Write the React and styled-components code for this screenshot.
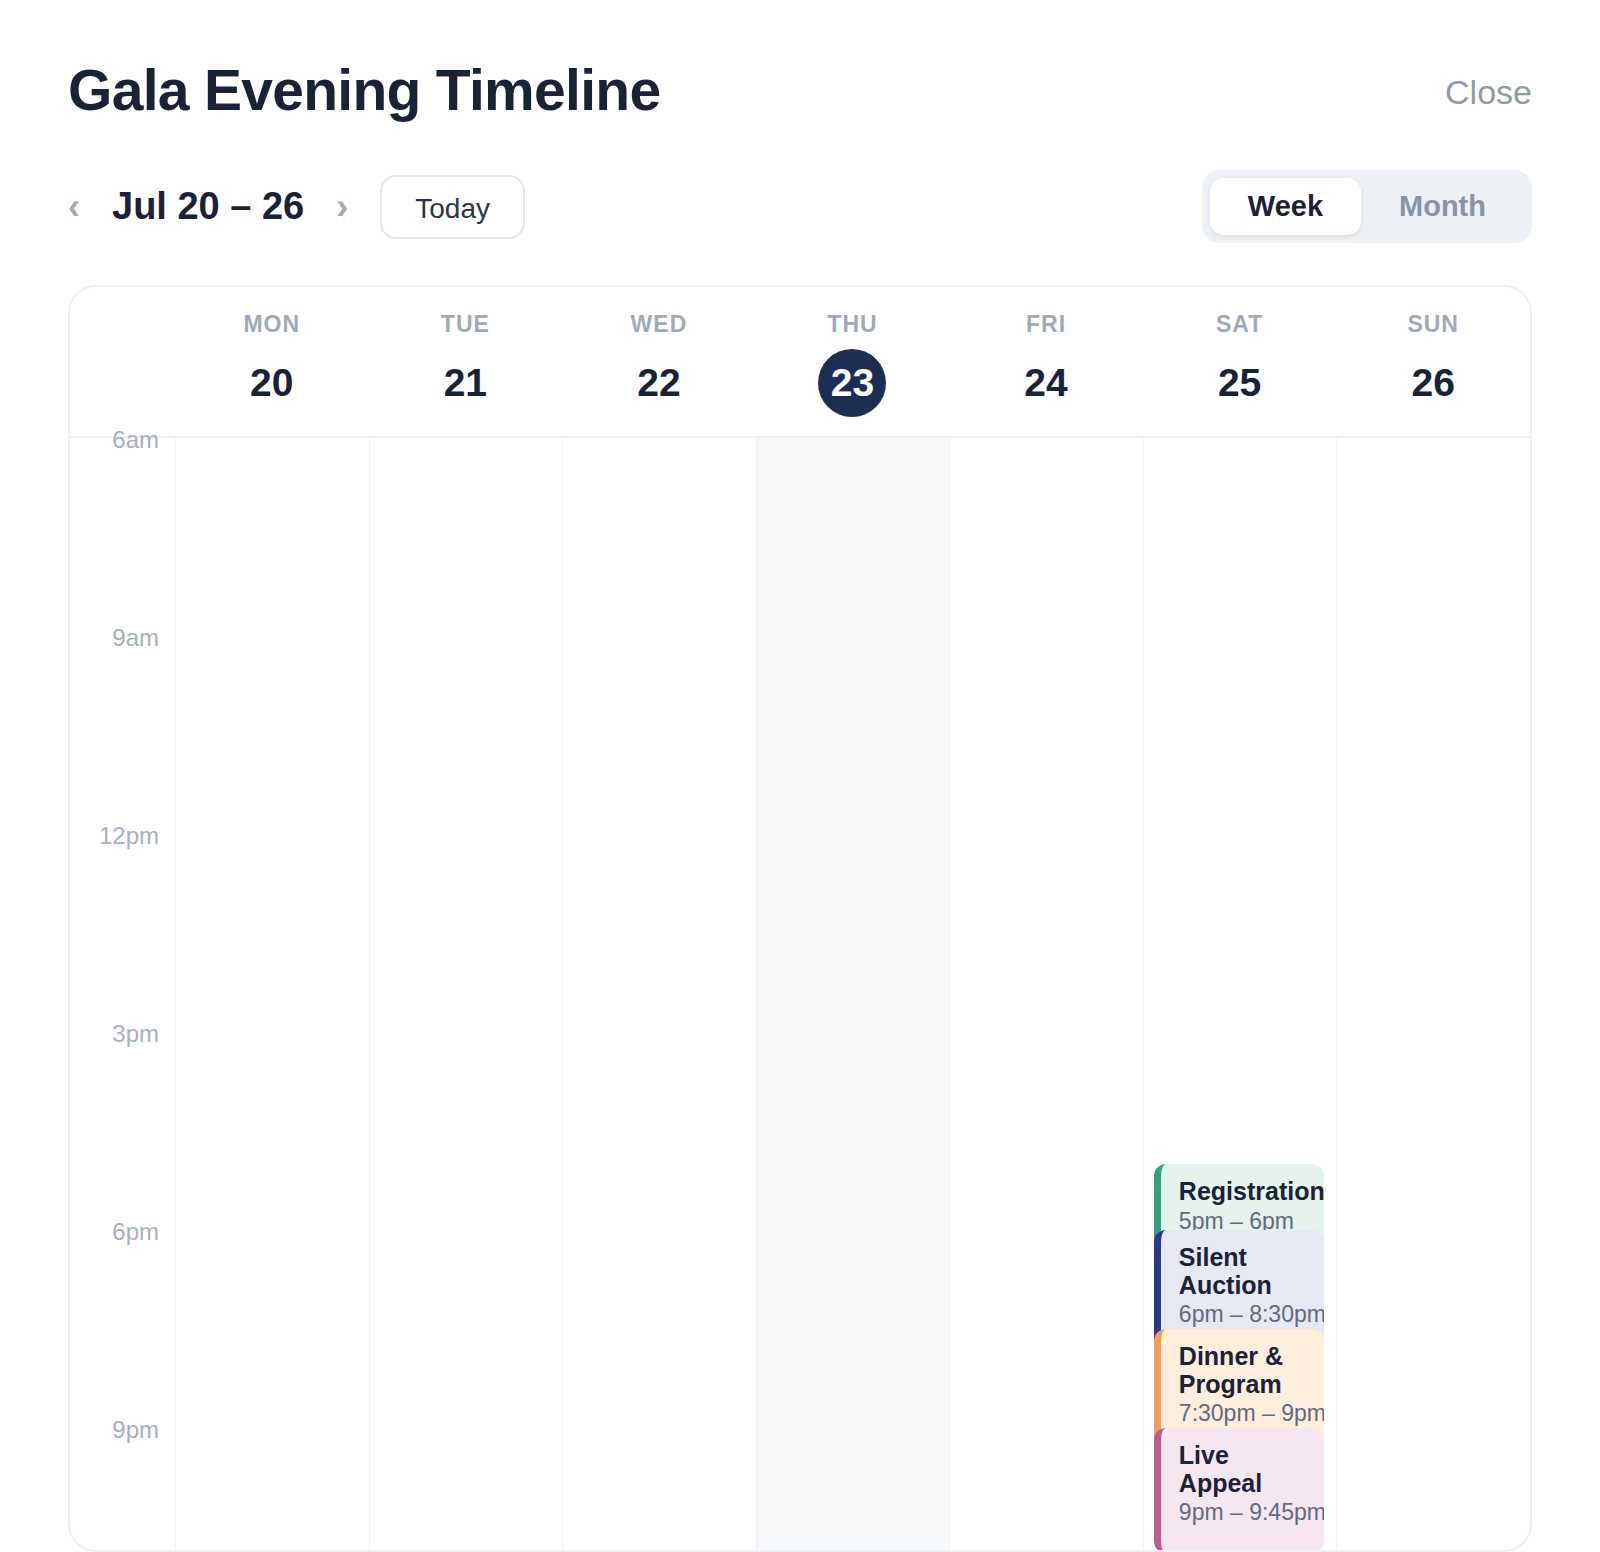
import React from "react";
import styled, { createGlobalStyle } from "styled-components";

const HOUR = 66;
const START_HOUR = 6;
const HOURS_SHOWN = 18;

const GlobalStyle = createGlobalStyle`
  html, body {
    margin: 0;
    padding: 0;
    background: #ffffff;
  }
  body {
    font-family: "Liberation Sans", Arial, sans-serif;
    color: #1a2238;
  }
  * {
    box-sizing: border-box;
  }
`;

const Page = styled.div`
  height: 100vh;
  display: flex;
  flex-direction: column;
  padding: 56px 68px 0;
`;

const TitleRow = styled.div`
  display: flex;
  align-items: center;
  justify-content: space-between;
  margin-bottom: 46px;
`;

const Title = styled.h1`
  margin: 0;
  font-size: 57px;
  line-height: 1.2;
  font-weight: 700;
  letter-spacing: -0.7px;
  color: #1a2238;
`;

const CloseButton = styled.button`
  border: none;
  background: none;
  padding: 0;
  margin-top: 5px;
  font-family: inherit;
  font-size: 34px;
  color: #8f99aa;
  cursor: pointer;
`;

const Toolbar = styled.div`
  display: flex;
  align-items: center;
  justify-content: space-between;
  margin-bottom: 42px;
`;

const NavGroup = styled.div`
  display: flex;
  align-items: center;
  gap: 32px;
`;

const Chevron = styled.button`
  border: none;
  background: none;
  padding: 0;
  font-family: inherit;
  font-size: 36px;
  font-weight: 700;
  line-height: 1;
  color: #a3abba;
  cursor: pointer;
`;

const RangeLabel = styled.div`
  font-size: 38px;
  font-weight: 700;
  color: #1a2238;
`;

const TodayButton = styled.button`
  height: 64px;
  padding: 4px 33px 0;
  border: 2px solid #e3e7ef;
  border-radius: 16px;
  background: #ffffff;
  font-family: inherit;
  font-size: 28px;
  color: #2b3448;
  cursor: pointer;
`;

const Segmented = styled.div`
  display: flex;
  padding: 8px;
  border-radius: 18px;
  background: #edf0f5;
`;

const Segment = styled.button`
  height: 57px;
  padding: 0 38px;
  border: none;
  border-radius: 14px;
  font-family: inherit;
  font-size: 29px;
  font-weight: 700;
  cursor: pointer;
  background: ${(p) => (p.$active ? "#ffffff" : "transparent")};
  color: ${(p) => (p.$active ? "#1a2238" : "#8a93a6")};
  box-shadow: ${(p) => (p.$active ? "0 2px 5px rgba(20, 30, 60, 0.08)" : "none")};
`;

const Card = styled.div`
  flex: 1;
  min-height: 0;
  display: flex;
  flex-direction: column;
  border: 2px solid #edf0f5;
  border-radius: 28px;
  overflow: hidden;
`;

const HeaderRow = styled.div`
  display: grid;
  grid-template-columns: 105px repeat(7, 1fr);
  padding: 24px 0 19px;
  border-bottom: 2px solid #edf0f4;
`;

const HeaderCell = styled.div`
  display: flex;
  flex-direction: column;
  align-items: center;
  gap: 11px;
`;

const DayName = styled.div`
  font-size: 23px;
  line-height: 27px;
  font-weight: 700;
  letter-spacing: 1px;
  color: #a0a9ba;
`;

const DayNum = styled.div`
  width: 68px;
  height: 68px;
  border-radius: 50%;
  display: flex;
  align-items: center;
  justify-content: center;
  font-size: 39px;
  font-weight: 700;
  background: ${(p) => (p.$today ? "#1d2e55" : "transparent")};
  color: ${(p) => (p.$today ? "#ffffff" : "#1a2238")};
`;

const Body = styled.div`
  flex: none;
  position: relative;
  height: ${HOUR * HOURS_SHOWN}px;
  display: grid;
  grid-template-columns: 105px repeat(7, 1fr);
`;

const Gutter = styled.div`
  position: relative;
`;

const HourLabel = styled.div`
  position: absolute;
  right: 16px;
  top: ${(p) => p.$top}px;
  font-size: 24px;
  line-height: 24px;
  color: #a6b0c0;
`;

const DayColumn = styled.div`
  position: relative;
  border-left: 1px solid #eef0f5;
  background: ${(p) => (p.$today ? "#f8f9fb" : "transparent")};
`;

const EventCard = styled.div`
  position: absolute;
  left: 10px;
  right: 12px;
  top: ${(p) => p.$top}px;
  min-height: ${(p) => p.$height}px;
  padding: 14px 12px 26px 18px;
  border-left: 7px solid ${(p) => p.$bar};
  border-radius: 12px;
  background: ${(p) => p.$bg};
  overflow: hidden;
`;

const EventTitle = styled.div`
  font-size: 25px;
  line-height: 27.5px;
  font-weight: 700;
  color: #1a2238;
`;

const EventTime = styled.div`
  margin-top: 2px;
  font-size: 23px;
  line-height: 27.6px;
  white-space: nowrap;
  color: #5f6b80;
`;

const days = [
  { name: "MON", num: 20 },
  { name: "TUE", num: 21 },
  { name: "WED", num: 22 },
  { name: "THU", num: 23, today: true },
  { name: "FRI", num: 24 },
  { name: "SAT", num: 25 },
  { name: "SUN", num: 26 },
];

const hourLabels = ["6am", "9am", "12pm", "3pm", "6pm", "9pm"];

const events = [
  { day: 5, title: "Registration", time: "5pm – 6pm", start: 17, end: 18, bg: "#e4f4ec", bar: "#34a07d" },
  { day: 5, title: "Silent Auction", time: "6pm – 8:30pm", start: 18, end: 20.5, bg: "#e6e8f4", bar: "#2f388c" },
  { day: 5, title: "Dinner & Program", time: "7:30pm – 9pm", start: 19.5, end: 21, bg: "#fdeedd", bar: "#f09e58" },
  { day: 5, title: "Live Appeal", time: "9pm – 9:45pm", start: 21, end: 21.75, bg: "#f5e6f0", bar: "#c25a92" },
];

export default function App() {
  return (
    <Page>
      <GlobalStyle />
      <TitleRow>
        <Title>Gala Evening Timeline</Title>
        <CloseButton>Close</CloseButton>
      </TitleRow>

      <Toolbar>
        <NavGroup>
          <Chevron aria-label="Previous week">‹</Chevron>
          <RangeLabel>Jul 20 – 26</RangeLabel>
          <Chevron aria-label="Next week">›</Chevron>
          <TodayButton>Today</TodayButton>
        </NavGroup>
        <Segmented>
          <Segment $active>Week</Segment>
          <Segment>Month</Segment>
        </Segmented>
      </Toolbar>

      <Card>
        <HeaderRow>
          <div />
          {days.map((d) => (
            <HeaderCell key={d.name}>
              <DayName>{d.name}</DayName>
              <DayNum $today={d.today}>{d.num}</DayNum>
            </HeaderCell>
          ))}
        </HeaderRow>

        <Body>
          <Gutter>
            {hourLabels.map((label, i) => (
              <HourLabel key={label} $top={i * 3 * HOUR - 10}>
                {label}
              </HourLabel>
            ))}
          </Gutter>
          {days.map((d, i) => (
            <DayColumn key={d.name} $today={d.today}>
              {events
                .filter((e) => e.day === i)
                .map((e) => (
                  <EventCard
                    key={e.title}
                    $top={(e.start - START_HOUR) * HOUR}
                    $height={(e.end - e.start) * HOUR - 4}
                    $bg={e.bg}
                    $bar={e.bar}
                  >
                    <EventTitle>{e.title}</EventTitle>
                    <EventTime>{e.time}</EventTime>
                  </EventCard>
                ))}
            </DayColumn>
          ))}
        </Body>
      </Card>
    </Page>
  );
}
